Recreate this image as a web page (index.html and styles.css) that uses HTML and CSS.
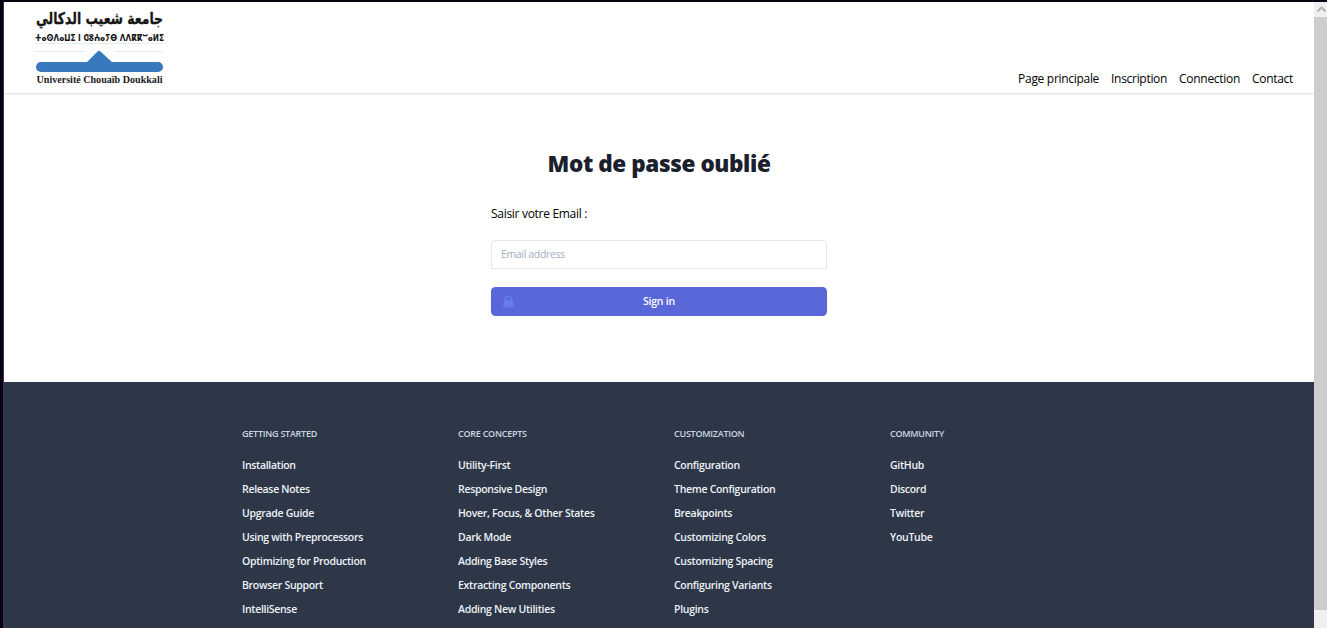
FILE: index.html
```html
<!DOCTYPE html>
<html lang="fr">
<head>
<meta charset="utf-8">
<title>Mot de passe oublié</title>
<link rel="stylesheet" href="styles.css">
</head>
<body>
<div class="window">
  <div class="page">
    <header class="header">
      <svg class="logo" width="140" height="84" viewBox="0 0 140 84" role="img" aria-label="Université Chouaïb Doukkali">
        <text class="logo-arabic" x="4" y="15.500" direction="ltr" textLength="127" lengthAdjust="spacingAndGlyphs">جامعة شعيب الدكالي</text>
        <text class="logo-tifinagh" x="3" y="33" textLength="129" lengthAdjust="spacingAndGlyphs">ⵜⴰⵙⴷⴰⵡⵉ ⵏ ⵛⵓⵄⴰⵢⴱ ⴷⴷⴽⴽⵯⴰⵍⵉ</text>
        <path d="M4 35.500H131M4 43.500H53M82 43.500H131" stroke="#dfefeb" fill="none"/>
        <path d="M54 55 L65.500 43.500Q67 42 68.500 43.500L81 55Z" fill="#3878bd"/>
        <rect x="4" y="54" width="127" height="10" rx="5" fill="#3878bd"/>
        <text class="logo-latin" x="4.500" y="74.500" textLength="126" lengthAdjust="spacingAndGlyphs">Université Chouaïb Doukkali</text>
      </svg>
      <nav class="nav"><a>Page principale</a><a>Inscription</a><a>Connection</a><a>Contact</a></nav>
    </header>
    <main class="main">
      <h2 class="title">Mot de passe oublié</h2>
      <form class="form">
        <label class="label" for="email">Saisir votre Email :</label>
        <input class="email" id="email" type="email" placeholder="Email address">
        <button class="submit" type="button">
          <svg class="lock" viewBox="0 0 20 20" fill="currentColor"><path fill-rule="evenodd" d="M5 9V7a5 5 0 0110 0v2a2 2 0 012 2v5a2 2 0 01-2 2H5a2 2 0 01-2-2v-5a2 2 0 012-2zm8-2v2H7V7a3 3 0 016 0z" clip-rule="evenodd"/></svg>
          <span>Sign in</span>
        </button>
      </form>
    </main>
    <footer class="footer">
      <section class="col"><h5 class="heading">Getting started</h5><ul class="links"><li>Installation</li><li>Release Notes</li><li>Upgrade Guide</li><li>Using with Preprocessors</li><li>Optimizing for Production</li><li>Browser Support</li><li>IntelliSense</li></ul></section>
      <section class="col"><h5 class="heading">Core concepts</h5><ul class="links"><li>Utility-First</li><li>Responsive Design</li><li>Hover, Focus, &amp; Other States</li><li>Dark Mode</li><li>Adding Base Styles</li><li>Extracting Components</li><li>Adding New Utilities</li></ul></section>
      <section class="col"><h5 class="heading">Customization</h5><ul class="links"><li>Configuration</li><li>Theme Configuration</li><li>Breakpoints</li><li>Customizing Colors</li><li>Customizing Spacing</li><li>Configuring Variants</li><li>Plugins</li></ul></section>
      <section class="col"><h5 class="heading">Community</h5><ul class="links"><li>GitHub</li><li>Discord</li><li>Twitter</li><li>YouTube</li></ul></section>
    </footer>
  </div>
  <div class="scrollbar">
    <svg class="arrow" width="13" height="15" viewBox="0 0 13 15"><path d="M3.500 9.500L7.500 5.500L11.500 9.500" stroke="#b2b2b2" stroke-width="2" fill="none"/></svg>
    <div class="thumb"></div>
  </div>
</div>
</body>
</html>
```
FILE: styles.css
```css
* { box-sizing: border-box; }
body { margin: 0; background: #fff; font-family: "Open Sans", "Noto Sans", sans-serif; font-size: 12px; line-height: 18px; color: #000; overflow: hidden; }
.window { display: flex; height: 628px; border-top: 2px solid #080414; border-left: 3px solid #020008; }
.page { flex: 1; display: flex; flex-direction: column; border-left: 1px solid #4b2768; overflow: hidden; }
.header { flex: none; height: 91px; display: flex; justify-content: space-between; align-items: flex-end; padding: 0 21px 5px 28px; box-shadow: 0 1px 2px rgba(0, 0, 0, .15); }
.logo { display: block; align-self: flex-start; margin-top: 6px; overflow: visible; }
.logo-arabic { font: bold 16px "DejaVu Sans", sans-serif; fill: #161616; stroke: #161616; stroke-width: .3px; }
.logo-tifinagh { font: bold 10px "DejaVu Sans", sans-serif; fill: #161616; }
.logo-latin { font: bold 10.500px "Liberation Serif", serif; fill: #1c1c1c; }
.nav { display: flex; gap: 12px; letter-spacing: -.3px; }
.main { flex: none; height: 289px; display: flex; flex-direction: column; align-items: center; padding-top: 57px; }
.title { margin: 0; font-size: 22.500px; line-height: 27px; font-weight: 800; color: #1a202c; letter-spacing: -.4px; }
.form { width: 336px; margin-top: 28px; display: flex; flex-direction: column; }
.label { letter-spacing: -.3px; }
.email { height: 29px; margin: 17px 0 18px; padding: 0 9px 2px; border: 1px solid #e2e8f0; border-radius: 4px 4px 0 0; font: 10.500px "Open Sans", sans-serif; letter-spacing: -.35px; background: #fff; }
.email::placeholder { color: #a0aec0; opacity: 1; }
.submit { height: 29px; border: 0; border-radius: 4.500px; padding: 0 30px 0 10px; background: #5a67d8; color: #fff; display: flex; align-items: center; font: 600 10.500px "Open Sans", sans-serif; letter-spacing: -.2px; }
.submit span { flex: 1; text-align: center; margin-left: 5px; padding-bottom: 2px; }
.lock { width: 15px; height: 15px; color: #667eea; }
.footer { flex: 1; background: #2d3748; display: grid; grid-template-columns: repeat(4, 216px); align-content: start; padding: 45px 0 0 238px; }
.heading { margin: 0; font-size: 9px; line-height: 14px; font-weight: 600; color: #cbd5e0; text-transform: uppercase; letter-spacing: -.25px; }
.links { list-style: none; margin: 12px 0 0; padding: 0; font-size: 10.500px; line-height: 24px; font-weight: 600; color: #edf2f7; letter-spacing: -.3px; white-space: nowrap; }
.scrollbar { width: 13px; background: #f0f0f0; }
.arrow { display: block; }
.thumb { height: 593px; background: #cdcdcd; }
```
